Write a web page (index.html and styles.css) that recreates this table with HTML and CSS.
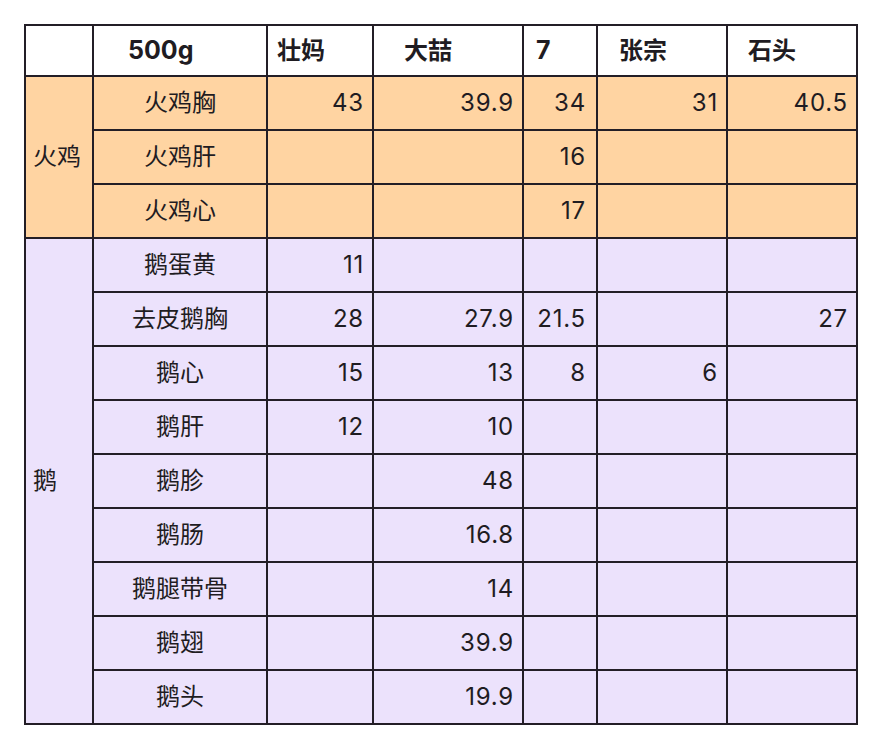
FILE: index.html
```html
<!DOCTYPE html>
<html lang="zh">
<head>
<meta charset="utf-8">
<title>价格表</title>
<link rel="stylesheet" href="styles.css">
</head>
<body>
<div class="sheet">
  <div class="cell head"></div>
  <div class="cell head h2">500g</div>
  <div class="cell head h3">壮妈</div>
  <div class="cell head h4">大喆</div>
  <div class="cell head h5">7</div>
  <div class="cell head h6">张宗</div>
  <div class="cell head h7">石头</div>

  <div class="cell group turkey span3">火鸡</div>
  <div class="cell name turkey">火鸡胸</div>
  <div class="cell num turkey">43</div>
  <div class="cell num turkey">39.9</div>
  <div class="cell num n5 turkey">34</div>
  <div class="cell num turkey">31</div>
  <div class="cell num turkey">40.5</div>

  <div class="cell name turkey">火鸡肝</div>
  <div class="cell num turkey"></div>
  <div class="cell num turkey"></div>
  <div class="cell num n5 turkey">16</div>
  <div class="cell num turkey"></div>
  <div class="cell num turkey"></div>

  <div class="cell name turkey">火鸡心</div>
  <div class="cell num turkey"></div>
  <div class="cell num turkey"></div>
  <div class="cell num n5 turkey">17</div>
  <div class="cell num turkey"></div>
  <div class="cell num turkey"></div>

  <div class="cell group goose span9">鹅</div>
  <div class="cell name goose">鹅蛋黄</div>
  <div class="cell num goose">11</div>
  <div class="cell num goose"></div>
  <div class="cell num n5 goose"></div>
  <div class="cell num goose"></div>
  <div class="cell num goose"></div>

  <div class="cell name goose">去皮鹅胸</div>
  <div class="cell num goose">28</div>
  <div class="cell num goose">27.9</div>
  <div class="cell num n5 goose">21.5</div>
  <div class="cell num goose"></div>
  <div class="cell num goose">27</div>

  <div class="cell name goose">鹅心</div>
  <div class="cell num goose">15</div>
  <div class="cell num goose">13</div>
  <div class="cell num n5 goose">8</div>
  <div class="cell num goose">6</div>
  <div class="cell num goose"></div>

  <div class="cell name goose">鹅肝</div>
  <div class="cell num goose">12</div>
  <div class="cell num goose">10</div>
  <div class="cell num n5 goose"></div>
  <div class="cell num goose"></div>
  <div class="cell num goose"></div>

  <div class="cell name goose">鹅胗</div>
  <div class="cell num goose"></div>
  <div class="cell num goose">48</div>
  <div class="cell num n5 goose"></div>
  <div class="cell num goose"></div>
  <div class="cell num goose"></div>

  <div class="cell name goose">鹅肠</div>
  <div class="cell num goose"></div>
  <div class="cell num goose">16.8</div>
  <div class="cell num n5 goose"></div>
  <div class="cell num goose"></div>
  <div class="cell num goose"></div>

  <div class="cell name goose">鹅腿带骨</div>
  <div class="cell num goose"></div>
  <div class="cell num goose">14</div>
  <div class="cell num n5 goose"></div>
  <div class="cell num goose"></div>
  <div class="cell num goose"></div>

  <div class="cell name goose">鹅翅</div>
  <div class="cell num goose"></div>
  <div class="cell num goose">39.9</div>
  <div class="cell num n5 goose"></div>
  <div class="cell num goose"></div>
  <div class="cell num goose"></div>

  <div class="cell name goose">鹅头</div>
  <div class="cell num goose"></div>
  <div class="cell num goose">19.9</div>
  <div class="cell num n5 goose"></div>
  <div class="cell num goose"></div>
  <div class="cell num goose"></div>
</div>
</body>
</html>
```
FILE: styles.css
```css
html, body {
  margin: 0;
  padding: 0;
  background: #ffffff;
}
body {
  padding: 24px 0 0 24px;
  font-family: Inter, "Noto Sans CJK SC", sans-serif;
  color: #1f1c22;
}
.sheet {
  display: grid;
  width: 834px;
  box-sizing: border-box;
  grid-template-columns: 66px 172px 104px 148px 72px 128px 128px;
  grid-template-rows: 49px repeat(12, 52px);
  gap: 2px;
  padding: 2px;
  background: #231e26;
}
.cell {
  display: flex;
  align-items: center;
  font-size: 24px;
  line-height: 1;
  white-space: nowrap;
  box-sizing: border-box;
}
.head {
  background: #ffffff;
  font-weight: 700;
}
.h2 { padding-left: 34px; font-size: 25px; }
.h3 { padding-left: 9px; }
.h4 { padding-left: 30px; }
.h5 { padding-left: 12px; font-size: 25px; }
.h6 { padding-left: 21px; }
.h7 { padding-left: 20px; }
.turkey { background: #ffd4a2; }
.goose { background: #ece2fc; }
.group {
  padding-left: 7px;
}
.span3 { grid-row: span 3; }
.span9 { grid-row: span 9; }
.name {
  justify-content: center;
}
.num {
  justify-content: flex-end;
  padding-right: 8px;
  letter-spacing: 0.8px;
}
.n5 { padding-right: 10px; }
```
